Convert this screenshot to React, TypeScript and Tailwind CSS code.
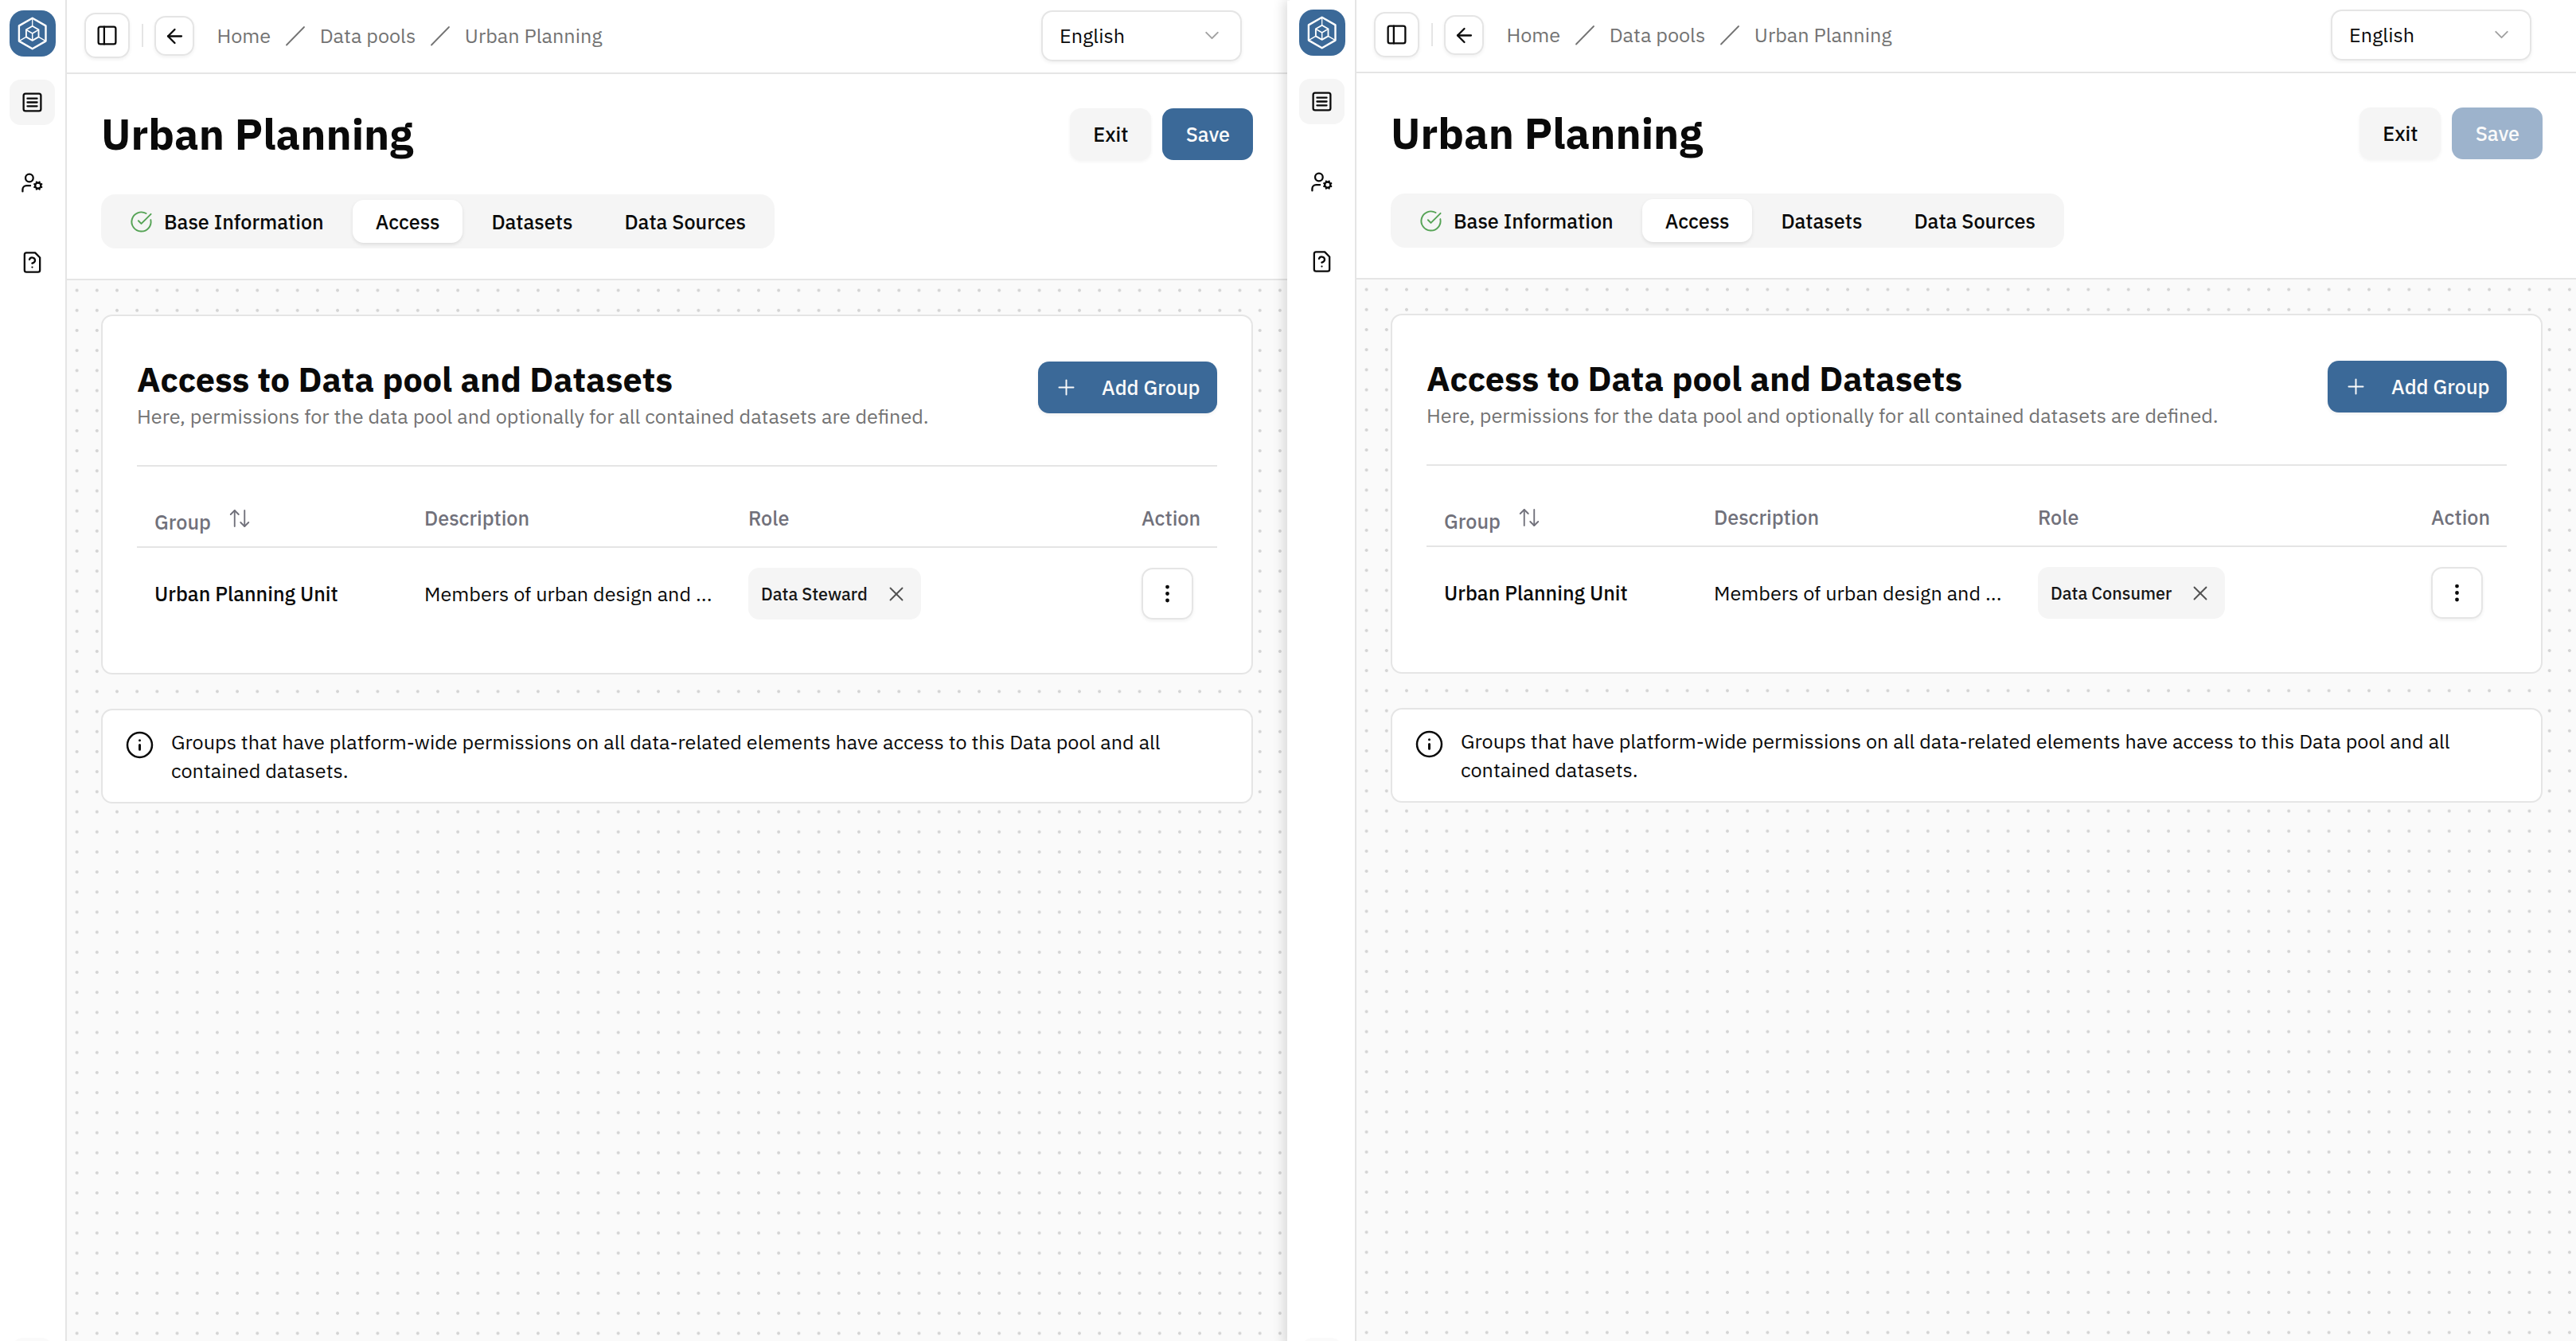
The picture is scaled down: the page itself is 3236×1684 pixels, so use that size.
import React from 'react';
import { ArrowLeft, ArrowUpDown, ChevronDown, EllipsisVertical, PanelLeft, Plus, UserCog, X } from 'lucide-react';

interface PoolPageProps {
  role: string;
  saveDisabled?: boolean;
}

const Logo = () => (
  <svg width="58" height="58" viewBox="0 0 58 58" fill="none" stroke="white" strokeLinejoin="round" className="shrink-0 rounded-[18px] bg-[#3b6998]">
    <path d="M28.7 9.7 45.5 19.4V38.6L28.7 48.3 11.9 38.6V19.4Z" strokeWidth="2.4" />
    <path d="M28.7 19.7 36.5 24.2V33.4L28.7 37.9 20.9 33.4V24.2Z" strokeWidth="1.9" />
    <path d="M20.9 24.4 28.7 29 36.5 24.4M28.7 29V37.9" strokeWidth="1.5" />
    <path d="M28.7 9.7V19.7M11.9 38.6 20.9 33.4M45.5 38.6 36.5 33.4" strokeWidth="1.3" />
  </svg>
);

const NavIcon = ({ children }: { children: React.ReactNode }) => (
  <svg width="29" height="29" viewBox="0 0 24 24" fill="none" stroke="currentColor" strokeWidth="1.9" strokeLinecap="round" strokeLinejoin="round">
    {children}
  </svg>
);

const Sidebar = () => (
  <aside className="flex w-[84px] shrink-0 flex-col items-start border-r-2 border-neutral-200 bg-white pl-3 pt-[13px]">
    <Logo />
    <nav className="mt-[29px] flex flex-col gap-[43.2px]">
      <a className="flex h-[57.4px] w-[57px] items-center justify-center rounded-[14px] bg-neutral-100">
        <NavIcon>
          <rect x="3" y="3" width="18" height="18" rx="2" />
          <path d="M7 8h10M7 12h10M7 16h10" />
        </NavIcon>
      </a>
      <a className="flex h-[57.4px] w-[57px] items-center justify-center">
        <UserCog size={29} strokeWidth={1.9} />
      </a>
      <a className="flex h-[57.4px] w-[57px] items-center justify-center">
        <NavIcon>
          <path d="M15 2H6a2 2 0 0 0-2 2v16a2 2 0 0 0 2 2h12a2 2 0 0 0 2-2V7z" />
          <path d="M9.1 9a3 3 0 0 1 5.82 1c0 2-3 3-3 3M12 17h.01" />
        </NavIcon>
      </a>
    </nav>
    <div className="mt-auto h-1 w-[57px] shrink-0 overflow-hidden">
      <div className="h-[57px] rounded-[18px] bg-neutral-50" />
    </div>
  </aside>
);

const Slash = () => (
  <svg width="26" height="28" viewBox="0 0 26 28" stroke="currentColor" strokeWidth="1.8" strokeLinecap="round" className="ml-[18px] mr-[17.6px]">
    <path d="M2 25.5 24 3" />
  </svg>
);

const TopBar = () => (
  <header className="flex h-[93px] shrink-0 items-center border-b-2 border-neutral-200 bg-white pb-0.5 pl-[22px] pr-[57px]">
    <button className="flex h-[57px] w-[57px] items-center justify-center rounded-[14px] border-2 border-neutral-200 shadow-[0_2px_4px_rgba(0,0,0,0.06)]">
      <PanelLeft size={29} strokeWidth={1.9} />
    </button>
    <div className="ml-[15px] h-[29px] w-0.5 bg-neutral-200" />
    <button className="ml-3.5 mt-px flex h-[50px] w-[50px] items-center justify-center rounded-[14px] border-2 border-neutral-200 shadow-[0_2px_4px_rgba(0,0,0,0.06)]">
      <ArrowLeft size={29} strokeWidth={1.9} />
    </button>
    <nav className="ml-[28.4px] flex items-center text-neutral-500">
      <span>Home</span>
      <Slash />
      <span>Data pools</span>
      <Slash />
      <span>Urban Planning</span>
    </nav>
    <button className="ml-auto flex h-[64px] w-[252px] items-center justify-between rounded-[14px] border-2 border-neutral-200 pl-[21px] pr-[21px] shadow-[0_2px_4px_rgba(0,0,0,0.06)]">
      English
      <ChevronDown size={29} strokeWidth={1.6} className="text-neutral-400" />
    </button>
  </header>
);

const Tabs = () => (
  <div className="flex h-[68px] w-[846px] items-center gap-[7px] rounded-[18px] bg-neutral-100 px-[7px] font-medium">
    <div className="flex h-[54px] items-center gap-3.5 px-[29px] pt-px">
      <svg width="29" height="29" viewBox="0 0 24 24" fill="none" stroke="#55a355" strokeWidth="1.6" strokeLinecap="round" strokeLinejoin="round">
        <path d="M21.801 10A10 10 0 1 1 17 3.335" />
        <path d="m9 11 3 3L22 4" />
      </svg>
      Base Information
    </div>
    <div className="flex h-[54px] items-center rounded-[14px] bg-white px-[29px] pt-px shadow-[0_2px_4px_rgba(0,0,0,0.1)]">Access</div>
    <div className="flex h-[54px] items-center px-[29px] pt-px">Datasets</div>
    <div className="flex h-[54px] items-center px-[29px] pt-px">Data Sources</div>
  </div>
);

const AccessCard = ({ role }: { role: string }) => (
  <section className="h-[452px] rounded-[14px] border-2 border-neutral-200 bg-white px-[43px] pt-[51px]">
    <div className="flex items-start justify-between border-b-2 border-neutral-200 pb-[43px]">
      <div>
        <h2 className="text-[43.2px] font-bold leading-[57px]">Access to Data pool and Datasets</h2>
        <p className="leading-9 text-neutral-500">Here, permissions for the data pool and optionally for all contained datasets are defined.</p>
      </div>
      <button className="mt-1.5 flex h-[65px] w-[225px] items-center justify-between rounded-[14px] bg-[#3b6998] pl-[20px] pr-[22px] font-medium text-neutral-50 shadow-[0_2px_4px_rgba(0,0,0,0.06)]">
        <Plus size={31} strokeWidth={1.5} />
        Add Group
      </button>
    </div>

    {/* Table */}
    <div className="grid h-[102px] grid-cols-[338px_408px_494px_1fr] items-center border-b-2 border-neutral-200 pt-[29px] font-medium text-zinc-500">
      <div className="flex items-center pl-[22px]">
        <span className="mt-2.5">Group</span>
        <ArrowUpDown size={30} strokeWidth={1.5} className="ml-[21px]" />
      </div>
      <div className="pl-[23px]">Description</div>
      <div className="pl-[22px]">Role</div>
      <div className="pl-[22px]">Action</div>
    </div>
    <div className="grid grid-cols-[338px_408px_494px_1fr] items-center pt-[25px]">
      <div className="pl-[22px] font-medium">Urban Planning Unit</div>
      <div className="pl-[23px]">Members of urban design and ...</div>
      <div className="pl-[22px]">
        <span className="inline-flex h-[65px] items-center gap-[21px] rounded-[14px] bg-neutral-100 px-4 align-top text-[21.6px] font-medium text-neutral-900">
          {role}
          <X size={30} strokeWidth={1.5} className="text-neutral-600" />
        </span>
      </div>
      <div className="pl-[22px]">
        <button className="flex h-[65px] w-[65px] items-center justify-center rounded-[14px] border-2 border-neutral-200 shadow-[0_2px_4px_rgba(0,0,0,0.06)]">
          <EllipsisVertical size={29} strokeWidth={2} />
        </button>
      </div>
    </div>
  </section>
);

const InfoCard = () => (
  <section className="mt-[43px] flex h-[119px] items-start rounded-[14px] border-2 border-neutral-200 bg-white pl-[28px] pr-7 pt-[22px]">
    <svg width="37" height="37" viewBox="0 0 37 37" fill="none" stroke="currentColor" strokeLinecap="round" className="mt-[3px] shrink-0">
      <circle cx="18.5" cy="18.5" r="15.5" strokeWidth="2.5" />
      <path d="M18.5 18.6v5.6M18.5 12.7h.01" strokeWidth="3" />
    </svg>
    <p className="ml-[21px] leading-9">
      Groups that have platform-wide permissions on all data-related elements have access to this Data pool and all contained datasets.
    </p>
  </section>
);

const PoolPage = ({ role, saveDisabled }: PoolPageProps) => (
  <div className="flex h-full">
    <Sidebar />
    <div className="flex min-w-0 flex-1 flex-col">
      <TopBar />
      <div className="h-[259px] shrink-0 border-b-2 border-neutral-200 bg-white pl-[43px] pr-[42.6px] pt-[43px]">
        <div className="flex h-[65px] items-center">
          <h1 className="text-[54px] font-bold leading-[65px]">Urban Planning</h1>
          <button className="ml-auto h-[65px] w-[102px] rounded-[14px] bg-neutral-100 font-medium shadow-[0_2px_4px_rgba(0,0,0,0.05)]">Exit</button>
          <button className={`ml-3.5 h-[65px] w-[114px] rounded-[14px] font-medium text-neutral-50 ${saveDisabled ? 'bg-[#9db3cc]' : 'bg-[#3b6998]'}`}>Save</button>
        </div>
        <div className="pt-[43px]">
          <Tabs />
        </div>
      </div>
      <main className="min-h-0 flex-1 bg-neutral-50 bg-[radial-gradient(circle,#d4d4d4_1.6px,transparent_2.2px)] bg-[length:25.2px_25.2px] pl-[43px] pr-[42.6px] pt-[43px]">
        <AccessCard role={role} />
        <InfoCard />
      </main>
    </div>
  </div>
);

export default function App() {
  return (
    <div className="flex h-[1684px] w-[3236px] overflow-hidden bg-white font-['IBM_Plex_Sans',Inter,sans-serif] text-[25.2px] leading-9 text-neutral-950">
      <div className="h-full w-[1617px] shrink-0">
        <PoolPage role="Data Steward" />
      </div>
      <div className="relative h-full w-[1619px] shrink-0 border-r-2 border-t border-t-neutral-100 border-r-neutral-200 bg-white pl-[3px] shadow-[0_4px_14px_4px_rgba(0,0,0,0.14)]">
        {/* the page is slightly wider than the window and runs under its right edge */}
        <div className="-mr-[3px] -mt-0.5 h-[1685px]">
          <PoolPage role="Data Consumer" saveDisabled />
        </div>
      </div>
    </div>
  );
}
